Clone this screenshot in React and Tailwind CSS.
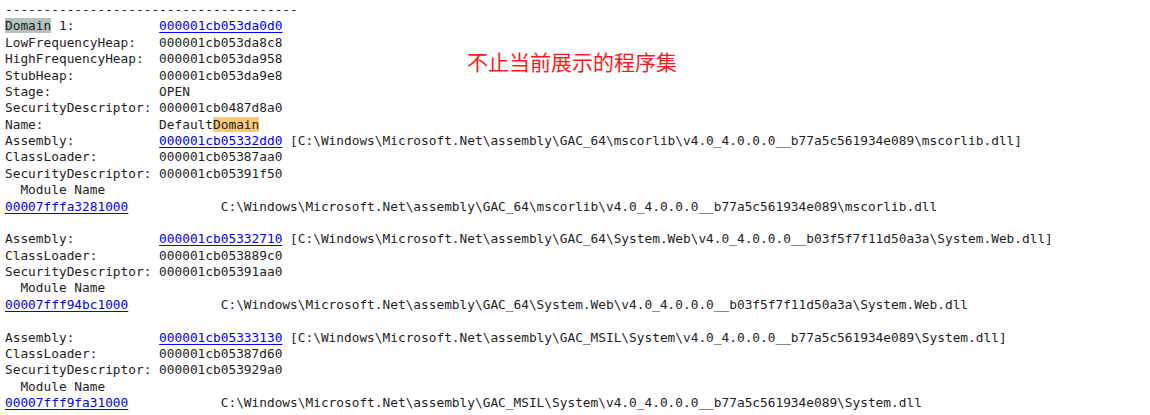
import React from "react";

const Link = ({ children }) => (
  <span className="text-[#0000ee] underline underline-offset-[2px]">{children}</span>
);

const Gray = ({ children }) => <span className="bg-[#b4c2bf]">{children}</span>;
const Orange = ({ children }) => <span className="bg-[#fdc878]">{children}</span>;

const assemblies = [
  {
    addr: "000001cb05332dd0",
    path: "C:\\Windows\\Microsoft.Net\\assembly\\GAC_64\\mscorlib\\v4.0_4.0.0.0__b77a5c561934e089\\mscorlib.dll",
    loader: "000001cb05387aa0",
    security: "000001cb05391f50",
    module: "00007fffa3281000",
  },
  {
    addr: "000001cb05332710",
    path: "C:\\Windows\\Microsoft.Net\\assembly\\GAC_64\\System.Web\\v4.0_4.0.0.0__b03f5f7f11d50a3a\\System.Web.dll",
    loader: "000001cb053889c0",
    security: "000001cb05391aa0",
    module: "00007fff94bc1000",
  },
  {
    addr: "000001cb05333130",
    path: "C:\\Windows\\Microsoft.Net\\assembly\\GAC_MSIL\\System\\v4.0_4.0.0.0__b77a5c561934e089\\System.dll",
    loader: "000001cb05387d60",
    security: "000001cb053929a0",
    module: "00007fff9fa31000",
  },
];

function App() {
  return (
    <div className="relative w-[1150px] h-[415px] overflow-hidden bg-white">
      <div className="pl-[5px] pt-[2px] whitespace-pre text-[12.8px] leading-[16.375px] text-[#1e1e1e] [font-family:'DejaVu_Sans_Mono',monospace]">
        <div>{"--------------------------------------"}</div>
        <div>
          <Gray>Domain</Gray>{" 1:           "}<Link>000001cb053da0d0</Link>
        </div>
        <div>{"LowFrequencyHeap:   000001cb053da8c8"}</div>
        <div>{"HighFrequencyHeap:  000001cb053da958"}</div>
        <div>{"StubHeap:           000001cb053da9e8"}</div>
        <div>{"Stage:              OPEN"}</div>
        <div>{"SecurityDescriptor: 000001cb0487d8a0"}</div>
        <div>
          {"Name:               Default"}<Orange>Domain</Orange>
        </div>
        {assemblies.map((a, i) => (
          <div key={a.addr}>
            {i > 0 && <div>{" "}</div>}
            <div>
              {"Assembly:           "}<Link>{a.addr}</Link>{" [" + a.path + "]"}
            </div>
            <div>{"ClassLoader:        " + a.loader}</div>
            <div>{"SecurityDescriptor: " + a.security}</div>
            <div>{"  Module Name"}</div>
            <div>
              <Link>{a.module}</Link>{"            " + a.path}
            </div>
          </div>
        ))}
      </div>
      <div className="absolute left-[467px] top-[48px] text-[21px] leading-[26px] text-[#ff1a1a] [font-family:'Noto_Sans_CJK_SC',sans-serif]">
        不止当前展示的程序集
      </div>
    </div>
  );
}

export default App;
